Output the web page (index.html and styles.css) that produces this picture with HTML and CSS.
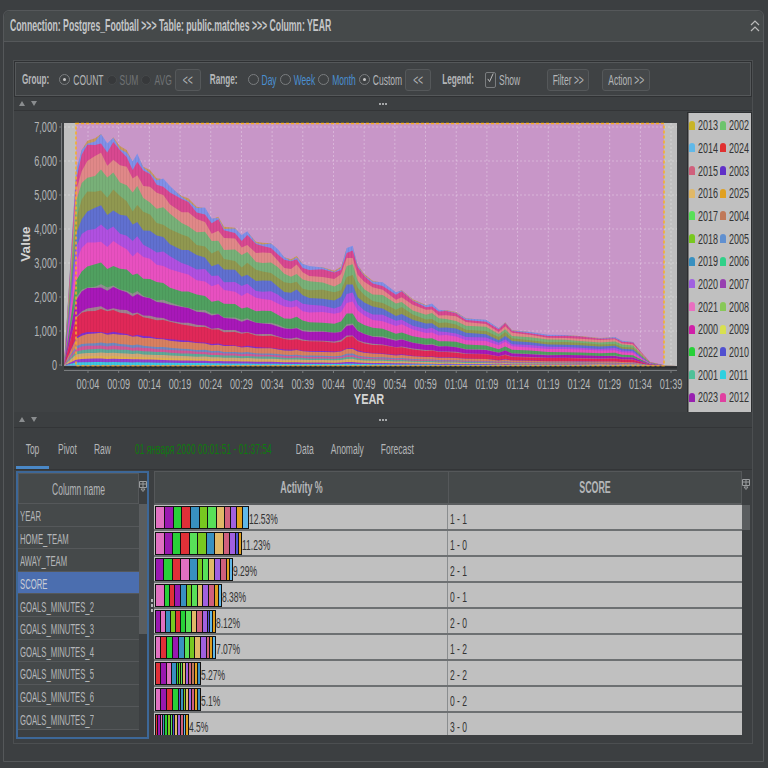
FILE: index.html
```html
<!DOCTYPE html>
<html lang="en">
<head>
    <meta charset="UTF-8">
    <meta name="viewport" content="width=device-width, initial-scale=1.0">
    <title>Postgres_Football YEAR</title>
    <link rel="stylesheet" href="styles.css">
</head>
<body>
    <div class="panel">
        <header class="panel-title">
            <span class="t title-text">Connection: Postgres_Football &gt;&gt;&gt; Table: public.matches &gt;&gt;&gt; Column: YEAR</span>
            <svg class="collapse" width="10" height="14" viewBox="0 0 10 14"><path d="M1 6l4-4 4 4M1 12l4-4 4 4" fill="none" stroke="#bbb" stroke-width="1.2"/></svg>
        </header>
        <div class="panel-body">
            <div class="inner">
                <div class="toolbar">
                    <span class="t label">Group:</span>
                    <i class="radio on first"></i><span class="t">COUNT</span>
                    <i class="radio dim"></i><span class="t muted">SUM</span>
                    <i class="radio dim"></i><span class="t muted">AVG</span>
                    <button class="btn small"><span class="t">&lt;&lt;</span></button>
                    <span class="t label range">Range:</span>
                    <i class="radio first"></i><span class="t link">Day</span>
                    <i class="radio"></i><span class="t link">Week</span>
                    <i class="radio"></i><span class="t link">Month</span>
                    <i class="radio on"></i><span class="t">Custom</span>
                    <button class="btn small"><span class="t">&lt;&lt;</span></button>
                    <span class="t label legend-label">Legend:</span>
                    <i class="check"><svg width="10" height="10" viewBox="0 0 10 10"><path d="M2 6l2 3 4-9" fill="none" stroke="#bbb" stroke-width="1.1"/></svg></i>
                    <span class="t">Show</span>
                    <button class="btn filter"><span class="t">Filter &gt;&gt;</span></button>
                    <button class="btn action"><span class="t">Action &gt;&gt;</span></button>
                </div>

                <div class="splitter">
                    <svg width="20" height="7" viewBox="0 0 20 7"><path d="M0 6l3-5 3 5zM12 1h6l-3 5z" fill="#8a8d8f"/></svg>
                    <span class="grip"><i></i><i></i><i></i></span>
                </div>

                <div class="chart-row">
                    <svg id="chart" class="chart" width="672" height="301" viewBox="14 111 672 301"></svg>
                    <div id="legend" class="legend"></div>
                </div>

                <div class="splitter lower">
                    <svg width="20" height="7" viewBox="0 0 20 7"><path d="M0 6l3-5 3 5zM12 1h6l-3 5z" fill="#8a8d8f"/></svg>
                    <span class="grip"><i></i><i></i><i></i></span>
                </div>

                <nav class="tabs">
                    <span class="tab active"><span class="t">Top</span></span>
                    <span class="tab"><span class="t">Pivot</span></span>
                    <span class="tab"><span class="t">Raw</span></span>
                    <span class="t range-text">01 января 2000 00:01:51 - 01:37:54</span>
                    <span class="tab"><span class="t">Data</span></span>
                    <span class="tab"><span class="t">Anomaly</span></span>
                    <span class="tab"><span class="t">Forecast</span></span>
                </nav>

                <div class="tables">
                    <div class="columns">
                        <div class="columns-list">
                            <div class="columns-head"><span class="t">Column name</span></div>
                            <div class="col-row"><span class="t">YEAR</span></div>
                            <div class="col-row"><span class="t">HOME_TEAM</span></div>
                            <div class="col-row"><span class="t">AWAY_TEAM</span></div>
                            <div class="col-row selected"><span class="t">SCORE</span></div>
                            <div class="col-row"><span class="t">GOALS_MINUTES_2</span></div>
                            <div class="col-row"><span class="t">GOALS_MINUTES_3</span></div>
                            <div class="col-row"><span class="t">GOALS_MINUTES_4</span></div>
                            <div class="col-row"><span class="t">GOALS_MINUTES_5</span></div>
                            <div class="col-row"><span class="t">GOALS_MINUTES_6</span></div>
                            <div class="col-row"><span class="t">GOALS_MINUTES_7</span></div>
                        </div>
                        <div class="scroll left-scroll">
                            <svg class="col-icon" width="8" height="11" viewBox="0 0 8 11"><path d="M.5.5h7v6h-7zM.5 3h7M4 .5v6M2 8h4l-2 2.5z" fill="none" stroke="#9a9d9f"/></svg>
                            <div class="thumb left-thumb"></div>
                        </div>
                    </div>
                    <div class="drag-dots"><i></i><i></i><i></i></div>
                    <div class="activity">
                        <div class="activity-main">
                            <div class="activity-head">
                                <div class="head-cell first-col"><span class="t bold">Activity %</span></div>
                                <div class="head-cell"><span class="t bold">SCORE</span></div>
                            </div>
                            <div id="rows" class="activity-rows"></div>
                        </div>
                        <div class="scroll right-scroll">
                            <svg class="col-icon" width="8" height="11" viewBox="0 0 8 11"><path d="M.5.5h7v6h-7zM.5 3h7M4 .5v6M2 8h4l-2 2.5z" fill="none" stroke="#9a9d9f"/></svg>
                            <div class="thumb right-thumb"></div>
                        </div>
                    </div>
                </div>
            </div>
        </div>
    </div>
    <script src="chart.js"></script>
</body>
</html>
```

FILE: styles.css
```css
* {
    box-sizing: border-box;
}
body {
    margin: 0;
    height: 768px;
    overflow: hidden;
    background-color: #3c3f41;
    color: #b4b6b8;
    font-family: "Liberation Sans Narrow", "Liberation Sans", sans-serif;
    font-size: 8.5px;
}
.t {
    display: inline-block;
    white-space: nowrap;
    transform: scaleY(1.8);
}
.bold {
    font-weight: bold;
    font-size: 8.9px;
}
.panel {
    width: 761px;
    height: 752px;
    margin: 10px 0 0 3px;
    border: 1px solid #55585a;
    border-radius: 6px 6px 0 0;
}
.panel-title {
    display: flex;
    align-items: center;
    justify-content: space-between;
    height: 31px;
    padding: 0 3px 0 6px;
    background-color: #45494a;
    border-bottom: 1px solid #55585a;
    border-radius: 6px 6px 0 0;
}
.title-text {
    font-size: 8.7px;
    font-weight: bold;
    color: #c4c6c8;
}
.panel-body {
    padding: 19px 11px 0 10px;
}
.inner {
    outline: 1px solid #4c4f51;
}
.toolbar {
    display: flex;
    align-items: center;
    height: 36px;
    padding: 1px 0 0 7px;
    background-color: #3f4244;
    border: 1px solid #2f3133;
    box-shadow: inset 0 0 0 1px #55585a;
}
.label {
    font-weight: bold;
    font-size: 8.2px;
}
.muted {
    color: #6f7274;
}
.link {
    color: #4a8fd0;
}
.radio {
    flex: none;
    position: relative;
    width: 11px;
    height: 11px;
    margin: 0 3px;
    border: 1px solid #7a7d7f;
    border-radius: 50%;
}
.radio.first {
    margin-left: 10px;
}
.radio.on::after {
    content: "";
    position: absolute;
    left: 3px;
    top: 3px;
    width: 3px;
    height: 3px;
    border-radius: 50%;
    background-color: #c8c8c8;
}
.radio.dim {
    width: 10px;
    height: 10px;
    border-color: #46494b;
    background-color: #37393b;
}
.btn {
    display: flex;
    align-items: center;
    justify-content: center;
    height: 22px;
    padding: 0;
    color: #b4b6b8;
    font: inherit;
    background-color: #45484a;
    border: 1px solid #55585a;
    border-radius: 3px;
}
.btn.small {
    width: 26px;
    margin-left: 3px;
}
.range {
    margin-left: 9px;
}
.legend-label {
    margin-left: 11px;
}
.check {
    flex: none;
    display: flex;
    width: 11px;
    height: 16px;
    margin: 0 3px 0 11px;
    border: 1px solid #7a7d7f;
    border-radius: 2px;
}
.btn.filter {
    width: 42px;
    margin-left: 27px;
}
.btn.action {
    width: 48px;
    margin-left: 13px;
}
.splitter {
    display: flex;
    align-items: center;
    position: relative;
    height: 14px;
    padding-left: 5px;
    background-color: #3c3f41;
    border-bottom: 1px solid #333537;
}
.splitter.lower {
    height: 16px;
}
.grip {
    display: flex;
    gap: 1px;
    margin-left: 340px;
}
.grip i {
    width: 2px;
    height: 2px;
    background-color: #a5a7a9;
}
.chart-row {
    display: flex;
    height: 301px;
    background-color: #3f4244;
}
.chart {
    flex: none;
    display: block;
}
.legend {
    display: grid;
    grid-template-columns: 31px 31px;
    grid-auto-rows: 22.67px;
    align-self: flex-start;
    width: 65px;
    height: 301px;
    margin: 1px 0 0 1px;
    padding: 1px 0 0 1px;
    color: #333333;
    font-size: 9px;
    background-color: #c0c0c0;
    border: 1px solid #2c2e30;
    box-shadow: inset 1px 0 0 #777;
}
.legend-item {
    display: flex;
    align-items: center;
    gap: 3px;
}
.legend-item i {
    flex: none;
    width: 6px;
    height: 9px;
    border-radius: 3px 3px 0 0;
}
.legend-item .t {
    transform: scaleY(1.65);
}
.tabs {
    display: flex;
    align-items: center;
    height: 42px;
    border-bottom: 1px solid #333537;
}
.tab {
    display: flex;
    align-items: center;
    justify-content: center;
    height: 100%;
    padding: 0 8px;
    margin-left: 1px;
}
.tab.active {
    width: 33px;
    margin: 0 0 0 2px;
    padding: 3px 0 0;
    border-bottom: 3px solid #4a88c7;
}
.range-text {
    margin: 0 15px 0 16px;
    color: #0f7a0f;
}
.tables {
    display: flex;
    height: 273px;
    padding-top: 1px;
}
.columns {
    display: flex;
    flex: none;
    width: 133px;
    height: 268px;
    margin-left: 2px;
    border: 2px solid #3d6797;
}
.columns-list {
    flex: 1;
    overflow: hidden;
    font-size: 7.7px;
}
.columns-list .t {
    transform: scaleY(1.9);
}
.columns-head {
    display: flex;
    align-items: center;
    justify-content: center;
    height: 31px;
    font-size: 8.5px;
    background-color: #45494a;
    border: 1px solid #55585a;
}
.col-row {
    display: flex;
    align-items: center;
    height: 22.6px;
    padding: 4px 0 0 2px;
    background-color: #45494a;
    border-bottom: 1px solid #55585a;
}
.col-row.selected {
    color: #c8ccd4;
    background-color: #4b6eaf;
}
.scroll {
    position: relative;
    flex: none;
    width: 8px;
    background-color: #3c3f41;
}
.col-icon {
    position: absolute;
    top: 8px;
    left: 0;
}
.thumb {
    position: absolute;
    left: 0;
    width: 8px;
    background-color: #5a5d5f;
}
.left-thumb {
    top: 31px;
    height: 130px;
}
.right-thumb {
    top: 34px;
    height: 25px;
}
.drag-dots {
    display: flex;
    flex: none;
    flex-direction: column;
    justify-content: center;
    align-items: center;
    gap: 2px;
    width: 5px;
    height: 268px;
}
.drag-dots i {
    width: 2px;
    height: 3px;
    background-color: #b5b7b9;
}
.activity {
    display: flex;
    width: 596px;
    height: 265px;
}
.activity-main {
    flex: 1;
}
.activity-head {
    display: grid;
    grid-template-columns: 294px 1fr;
    height: 34px;
    background-color: #45494a;
    border: 1px solid #55585a;
    border-bottom: 2px solid #5a5d5f;
}
.head-cell {
    display: flex;
    align-items: center;
    justify-content: center;
}
.first-col {
    border-right: 1px solid #55585a;
}
.activity-rows {
    height: 230px;
    overflow: hidden;
    color: #333333;
    background-color: #c0c0c0;
}
.row {
    display: grid;
    grid-template-columns: 294px 1fr;
    height: 26px;
    border-bottom: 2px solid #6d7072;
}
.row-bar {
    display: flex;
    align-items: center;
    padding-left: 1px;
    border-right: 1px solid #8a8d8f;
}
.row-bar .t {
    margin-top: 3px;
}
.bar {
    display: flex;
    flex: none;
    gap: 1px;
    height: 23px;
    background-color: #111111;
    border: 1px solid #111111;
}
.row-score {
    display: flex;
    align-items: center;
    padding-left: 2px;
}
.row-score .t {
    margin-top: 4px;
}
```

FILE: chart.js
```js
// stacked area, legend and activity bars are all drawn from the data below
const years = [
    ['2013', '#c8b428'], ['2002', '#6cc46c'], ['2014', '#60b8e8'], ['2024', '#e03030'],
    ['2015', '#d0607c'], ['2003', '#6030c8'], ['2016', '#e0b868'], ['2025', '#e0a020'],
    ['2017', '#58e058'], ['2004', '#c07858'], ['2018', '#78c820'], ['2005', '#6090d0'],
    ['2019', '#3890c0'], ['2006', '#30d088'], ['2020', '#a060e0'], ['2007', '#9840b0'],
    ['2021', '#e870c0'], ['2008', '#88c858'], ['2000', '#d020a8'], ['2009', '#d8e050'],
    ['2022', '#28d038'], ['2010', '#5050d0'], ['2001', '#50c098'], ['2011', '#30d0e0'],
    ['2023', '#9820b0'], ['2012', '#e040a0']
];

// screen x, y of the top edge of the stack
const top_edge = [
    [64, 365], [76, 173.3], [81.7, 150], [87.3, 140.7], [95, 138.3], [101, 134], [107.3, 145], [113.3, 137.3],
    [120, 146], [126.7, 150], [132.7, 161.7], [137.3, 155], [143.3, 166.7], [150, 170], [156.7, 178.3],
    [163.3, 179.3], [170, 187.3], [181.7, 196], [188.3, 198.3], [196.7, 206.7], [205, 208.3], [211.7, 219.3],
    [218.3, 216.7], [224, 226.7], [235, 227.7], [241.7, 236], [247.3, 231.7], [256, 241.7], [262.7, 242.7],
    [271, 243.3], [277.7, 250], [284.3, 257.3], [291, 259.3], [296.7, 256], [302.7, 264], [309.3, 266.7],
    [322.7, 267.3], [334.3, 270.7], [341, 266.7], [346.7, 248.3], [352.7, 246.7], [357.7, 265], [364.3, 274],
    [372.7, 280.7], [382.7, 282.7], [396, 292.7], [401.7, 290], [412.7, 299.3], [426, 305], [432, 304],
    [438.7, 310], [446, 310], [456, 312], [466, 318.3], [486, 320], [498.7, 328.3], [505.3, 322.3], [512, 330],
    [530, 332], [548, 335], [565, 335], [580, 336], [600, 338], [615, 337], [622, 341], [633, 342], [642, 353],
    [650, 362], [664, 365.3], [677, 365.5]
];

// upper edge of each layer as a share of the stack, bottom to top
const layers = [
    [.015, '#40c8e0'], [.03, '#9040d0'], [.041, '#e0b050'], [.056, '#d0a878'], [.072, '#60a898'], [.087, '#d05898'],
    [.099, '#7088c0'], [.14, '#d88060'], [.147, '#8030d0'], [.243, '#e02858'], [.254, '#a08090'], [.341, '#a818b8'],
    [.35, '#909090'], [.441, '#50a060'], [.541, '#e850c0'], [.607, '#b050e0'], [.687, '#6070d0'], [.765, '#909850'],
    [.843, '#78b078'], [.912, '#e08888'], [.971, '#d84890'], [.996, '#8090e8'], [1, '#c89860']
];

const BASE = 365.5;

function drawChart() {
    let svg = '';
    svg += '<defs><pattern id="stripes" width="3" height="4" patternUnits="userSpaceOnUse">' +
        '<rect width="1" height="4" fill="rgba(0,0,0,.05)"/></pattern></defs>';
    svg += '<rect x="64" y="123" width="613" height="243" fill="#c0c0c0"/>';
    svg += '<rect x="76" y="123" width="588" height="243" fill="#c896c8"/>';

    // grid
    for (let i = 1; i <= 7; i++) {
        const y = 365 - i * 34;
        svg += `<path d="M64 ${y}H677" class="grid" stroke="#fff" stroke-opacity=".3" stroke-dasharray="2 2"/>`;
    }
    const ticks = [];
    for (let m = 4; m <= 99; m += 5) {
        const x = 88 + (m - 4) * 6.137;
        const h = String(Math.floor(m / 60)).padStart(2, '0');
        const mm = String(m % 60).padStart(2, '0');
        ticks.push([x, h + ':' + mm]);
        svg += `<path d="M${x} 123V366" stroke="#fff" stroke-opacity=".3" stroke-dasharray="2 2"/>`;
    }

    // layers, top one first so the lower ones paint over it
    for (let l = layers.length - 1; l >= 0; l--) {
        const f = layers[l][0];
        const pts = top_edge.map((p, i) => {
            const wiggle = l === layers.length - 1 ? 0 : .012 * Math.sin(i * 1.3 + l * 2.1);
            const y = BASE - (BASE - p[1]) * f * (1 + wiggle);
            return p[0] + ',' + y.toFixed(1);
        });
        svg += `<polygon points="64,${BASE} ${pts.join(' ')} 677,${BASE}" fill="${layers[l][1]}"/>`;
    }
    const outline = top_edge.map(p => p.join(',')).join(' ');
    svg += `<polygon points="64,${BASE} ${outline} 677,${BASE}" fill="url(#stripes)"/>`;

    // selected range
    svg += '<rect x="76" y="123.5" width="588" height="242.5" fill="none" stroke="#f8b020" stroke-width="1.5" stroke-dasharray="3 2"/>';
    svg += '<path d="M64 367.5H677" stroke="#2c2e30" stroke-width="2"/>';

    // axes
    svg += '<path d="M61.5 123V366M64 370.5H677" stroke="#7a7d7f" fill="none"/>';
    for (let i = 0; i <= 7; i++) {
        const y = 365 - i * 34;
        const label = i === 0 ? '0' : i + ',000';
        svg += `<path d="M59 ${y}h3" stroke="#7a7d7f"/>`;
        svg += `<text transform="translate(57 ${y + 5}) scale(.65 1)" text-anchor="end" class="tick">${label}</text>`;
    }
    ticks.forEach(t => {
        svg += `<path d="M${t[0]} 370v3" stroke="#7a7d7f"/>`;
        svg += `<text transform="translate(${t[0]} 388.5) scale(.65 1)" text-anchor="middle" class="tick">${t[1]}</text>`;
    });
    svg += '<text transform="translate(30 244) rotate(-90)" text-anchor="middle" class="axis-name">Value</text>';
    svg += '<text transform="translate(369 404) scale(.78 1)" text-anchor="middle" class="axis-name big">YEAR</text>';

    const el = document.getElementById('chart');
    el.innerHTML = svg;
    el.querySelectorAll('.tick').forEach(t => {
        t.setAttribute('fill', '#b4b6b8');
        t.setAttribute('font-size', '14');
        t.setAttribute('font-family', 'Liberation Sans');
    });
    el.querySelectorAll('.axis-name').forEach(t => {
        t.setAttribute('fill', '#d4d4d4');
        t.setAttribute('font-size', t.classList.contains('big') ? '14' : '13.5');
        t.setAttribute('font-weight', 'bold');
        t.setAttribute('font-family', 'Liberation Sans');
    });
}

function drawLegend() {
    document.getElementById('legend').innerHTML = years.map(y =>
        `<div class="legend-item"><i style="background:${y[1]}"></i><span class="t">${y[0]}</span></div>`
    ).join('');
}

const c = {
    pink: '#e070c0', purple: '#9a18b0', green: '#28d038', red: '#e03038', blue: '#3890c0', lime: '#78c820',
    lgreen: '#58e058', tan: '#e0b868', rose: '#d0607c', violet: '#a060e0', orange: '#e0a020', sky: '#60b8e8',
    navy: '#5050d0', brown: '#c07858'
};

const rows = [
    ['12.53%', '1 - 1', 'pink:8 purple:8 green:7 red:8 blue:8 lime:7 lgreen:8 tan:7 rose:5 violet:5 orange:5 sky:5'],
    ['11.23%', '1 - 0', 'pink:8 purple:7 green:7 red:8 lgreen:7 lime:8 blue:7 tan:8 rose:5 violet:5 navy:2 orange:2'],
    ['9.29%', '2 - 1', 'purple:7 green:8 red:7 pink:8 blue:7 lime:4 lgreen:5 tan:5 violet:5 rose:5 orange:2 sky:2'],
    ['8.38%', '0 - 1', 'pink:8 green:4 red:4 purple:5 blue:5 lime:4 lgreen:5 tan:4 violet:5 rose:5 orange:3 sky:2'],
    ['8.12%', '2 - 0', 'purple:4 pink:4 blue:4 lime:4 red:4 green:4 lgreen:5 tan:4 rose:5 violet:4 navy:1 sky:2 orange:2'],
    ['7.07%', '1 - 2', 'pink:4 red:5 green:5 purple:5 blue:5 lgreen:4 lime:4 tan:5 violet:5 rose:2 orange:2 sky:2'],
    ['5.27%', '2 - 2', 'red:4 purple:5 pink:4 blue:4 green:1 lime:1 lgreen:1 tan:2 violet:2 rose:2 brown:2 orange:2 blue:2'],
    ['5.1%', '0 - 2', 'pink:4 purple:5 red:5 green:5 navy:1 blue:2 lime:1 tan:2 violet:2 rose:2 orange:2 blue:2'],
    ['4.5%', '3 - 0', 'red:1 purple:2 pink:1 blue:1 green:2 lime:2 lgreen:1 navy:1 tan:2 violet:2 rose:2 sky:1 orange:2']
];

function drawRows() {
    document.getElementById('rows').innerHTML = rows.map(r => {
        const segs = r[2].split(' ').map(s => {
            const [name, w] = s.split(':');
            return `<i style="width:${w}px;background:${c[name]}"></i>`;
        }).join('');
        return `<div class="row"><div class="row-bar"><div class="bar">${segs}</div><span class="t">${r[0]}</span></div>` +
            `<div class="row-score"><span class="t">${r[1]}</span></div></div>`;
    }).join('');
}

drawChart();
drawLegend();
drawRows();
```
